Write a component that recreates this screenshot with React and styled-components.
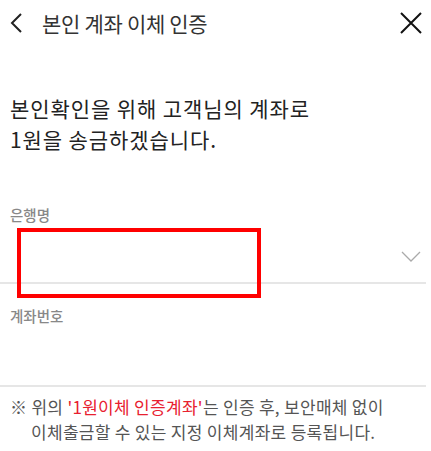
import styled, { createGlobalStyle } from "styled-components";

const GlobalStyle = createGlobalStyle`
  * { box-sizing: border-box; }
  body {
    margin: 0;
    background: #fff;
    font-family: "Noto Sans CJK KR", "Noto Sans", sans-serif;
  }
`;

//레이아웃
const Page = styled.div`
  width: 431px;
  min-height: 451px;
  background: #fff;
`;
const Header = styled.header`
  display: flex;
  align-items: center;
  height: 46px;
  padding: 0 8px 0 9px;
`;
const IconButton = styled.button`
  display: flex;
  align-items: center;
  justify-content: center;
  padding: 0;
  border: none;
  background: none;
  cursor: pointer;
`;
const Title = styled.h1`
  flex: 1;
  margin: 0 0 0 19px;
  font-size: 21px;
  font-weight: 400;
  color: #333;
  letter-spacing: -0.3px;
`;
const Heading = styled.p`
  margin: 47px 0 0;
  padding: 0 10px;
  font-size: 21px;
  line-height: 31px;
  font-weight: 400;
  letter-spacing: 0.9px;
  color: #222;
`;
const Field = styled.div`
  margin-top: ${(props) => props.$top}px;
`;
const Label = styled.label`
  display: block;
  padding: 0 10px;
  font-size: 14.5px;
  line-height: 20px;
  font-weight: 500;
  color: #888;
`;
const SelectRow = styled.div`
  position: relative;
  display: flex;
  align-items: center;
  justify-content: flex-end;
  height: 57px;
  padding: 6px 10px 0;
  cursor: pointer;
`;
const InputRow = styled.div`
  height: 59px;
`;
const Divider = styled.div`
  width: 426px;
  height: 2px;
  background: #e6e6e6;
`;
// 빨간 강조 박스
const Highlight = styled.div`
  position: absolute;
  left: 17px;
  top: 3px;
  width: 244px;
  height: 70px;
  border: 4px solid #ff0000;
  pointer-events: none;
`;
const Notice = styled.p`
  margin: 0;
  padding: 7px 10px 0;
  font-size: 17px;
  line-height: 25px;
  letter-spacing: 0.3px;
  color: #555;
`;
const NoticeLine = styled.span`
  display: block;
  white-space: nowrap;
  padding-left: ${(props) => (props.$indent ? "21px" : "0")};
`;
const Red = styled.span`
  color: #e8202f;
`;

function BackIcon() {
  return (
    <svg width="14" height="22" viewBox="0 0 14 22">
      <path d="M12 2 L3 11 L12 20" fill="none" stroke="#222" strokeWidth="2" />
    </svg>
  );
}

function CloseIcon() {
  return (
    <svg width="24" height="24" viewBox="0 0 24 24">
      <path d="M2 2 L22 22 M22 2 L2 22" fill="none" stroke="#111" strokeWidth="2" />
    </svg>
  );
}

function ChevronDown() {
  return (
    <svg width="20" height="12" viewBox="0 0 20 12">
      <path d="M1 1 L10 10 L19 1" fill="none" stroke="#aaa" strokeWidth="1.3" />
    </svg>
  );
}

export default function App() {
  return (
    <Page>
      <GlobalStyle />
      <Header>
        <IconButton aria-label="뒤로">
          <BackIcon />
        </IconButton>
        <Title>본인 계좌 이체 인증</Title>
        <IconButton aria-label="닫기">
          <CloseIcon />
        </IconButton>
      </Header>
      <Heading>
        본인확인을 위해 고객님의 계좌로
        <br />
        1원을 송금하겠습니다.
      </Heading>
      <Field $top={50}>
        <Label>은행명</Label>
        <SelectRow>
          <Highlight />
          <ChevronDown />
        </SelectRow>
        <Divider />
      </Field>
      <Field $top={22}>
        <Label>계좌번호</Label>
        <InputRow />
        <Divider />
      </Field>
      <Notice>
        <NoticeLine>
          ※ 위의 <Red>'1원이체 인증계좌'</Red>는 인증 후, 보안매체 없이
        </NoticeLine>
        <NoticeLine $indent>이체출금할 수 있는 지정 이체계좌로 등록됩니다.</NoticeLine>
      </Notice>
    </Page>
  );
}
